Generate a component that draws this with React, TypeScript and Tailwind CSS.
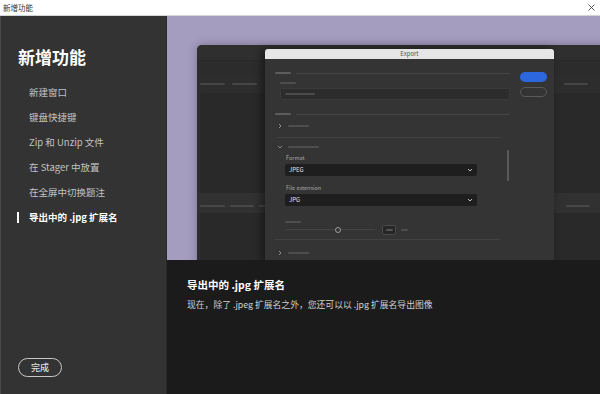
import React from "react";

const items = ["新建窗口", "键盘快捷键", "Zip 和 Unzip 文件", "在 Stager 中放置", "在全屏中切换题注", "导出中的 .jpg 扩展名"];

const ChevronRight = () => (
  <svg width="4" height="6" viewBox="0 0 4 6">
    <path d="M1 1l2 2-2 2" stroke="#8a8a8a" strokeWidth="1" fill="none" />
  </svg>
);

const ChevronDown = ({ color = "#8a8a8a" }: { color?: string }) => (
  <svg width="6" height="4" viewBox="0 0 6 4">
    <path d="M1 1l2 2 2-2" stroke={color} strokeWidth="1" fill="none" />
  </svg>
);

const SectionHead = ({ className = "" }: { className?: string }) => (
  <div className={`flex items-center gap-[5px] ${className}`}>
    <div className="w-[16px] h-[2px] rounded-full bg-[#5c5c5c]" />
    <div className="flex-1 h-px bg-[#454545]" />
  </div>
);

const Select = ({ value }: { value: string }) => (
  <div className="ml-[10px] w-[192px] h-[12px] rounded-[2px] bg-[#1e1e1e] flex items-center justify-between pl-[4px] pr-[4px]">
    <span className="text-[6px] leading-none text-[#e2e2e2]">{value}</span>
    <ChevronDown color="#bdbdbd" />
  </div>
);

const BackWindow = () => (
  <div className="absolute left-[30px] top-[29px] w-[420px] h-[240px] rounded-tl-[5px] bg-[#2d2d2d] shadow-[0_0_10px_rgba(40,30,60,0.35)] flex flex-col overflow-hidden">
    <div className="h-[16px] bg-[#2f2f2f] border-b border-[#292929]" />
    <div className="h-[14px] bg-[#2c2c2c]" />
    <div className="h-[18px] flex items-center px-[3px] gap-[7px]">
      <div className="w-[25px] h-[2px] rounded-full bg-[#464646]" />
      <div className="w-[25px] h-[2px] rounded-full bg-[#464646]" />
      <div className="ml-[300px] w-[24px] h-[2px] rounded-full bg-[#464646]" />
    </div>
    <div className="h-[100px] mx-[3px] rounded-[2px] bg-[#292929]" />
    <div className="h-[20px] flex items-start pt-[12px] px-[3px] gap-[5px] bg-[#313131]">
      <div className="w-[25px] h-[2px] rounded-full bg-[#474747]" />
      <div className="w-[24px] h-[2px] rounded-full bg-[#474747]" />
      <div className="w-[24px] h-[2px] rounded-full bg-[#474747]" />
      <div className="ml-[278px] w-[24px] h-[2px] rounded-full bg-[#474747]" />
    </div>
    <div className="flex-1 mx-[3px] rounded-[2px] bg-[#292929]" />
  </div>
);

const ExportDialog = () => (
  <div className="absolute left-[98px] top-[33px] w-[289px] h-[215px] rounded-t-[3px] bg-[#343434] shadow-[-3px_0_8px_rgba(0,0,0,0.45)] flex flex-col overflow-hidden">
    <div className="h-[10px] shrink-0 bg-[#e6e6e6] flex items-center justify-center">
      <span className="text-[6px] leading-none text-[#555]">Export</span>
    </div>
    <div className="relative flex flex-1">
      <div className="w-[245px] pl-[10px] flex flex-col">
        <SectionHead className="mt-[13px]" />
        <div className="mt-[8px] ml-[5px] w-[16px] h-[2px] rounded-full bg-[#4e4e4e]" />
        <div className="mt-[4px] ml-[5px] h-[12px] rounded-[2px] bg-[#2c2c2c] border border-[#3a3a3a] flex items-center">
          <div className="ml-[4px] w-[30px] h-[2px] rounded-full bg-[#4a4a4a]" />
        </div>
        <SectionHead className="mt-[13px]" />
        <div className="mt-[7px] h-[8px] flex items-center">
          <div className="ml-[2px] w-[6px] flex justify-center"><ChevronRight /></div>
          <div className="ml-[5px] w-[21px] h-[2px] rounded-full bg-[#4e4e4e]" />
        </div>
        <div className="mt-[7px] ml-[2px] w-[223px] h-px bg-[#414141]" />
        <div className="mt-[5px] h-[8px] flex items-center">
          <div className="ml-[2px] w-[6px] flex justify-center"><ChevronDown /></div>
          <div className="ml-[5px] w-[31px] h-[2px] rounded-full bg-[#4e4e4e]" />
        </div>
        <div className="mt-[3.5px] ml-[11px] text-[5.5px] leading-[7px] text-[#a8a8a8]">Format</div>
        <div className="mt-[2.5px]"><Select value="JPEG" /></div>
        <div className="mt-[8.5px] ml-[11px] text-[5.5px] leading-[7px] text-[#a8a8a8]">File extension</div>
        <div className="mt-[2px]"><Select value="JPG" /></div>
        <div className="mt-[15px] ml-[10px] w-[16px] h-[2px] rounded-full bg-[#4e4e4e]" />
        <div className="mt-[2px] h-[10px] flex items-center">
          <div className="ml-[11px] w-[49px] h-px bg-[#444]" />
          <div className="w-[6px] h-[6px] rounded-full border border-[#9a9a9a]" />
          <div className="w-[34px] h-px bg-[#444]" />
          <div className="ml-[7px] w-[14px] h-[10px] rounded-[2px] border border-[#4a4a4a] bg-[#262626] flex items-center justify-center">
            <div className="w-[7px] h-[2px] rounded-full bg-[#555]" />
          </div>
          <div className="ml-[5px] w-[7px] h-[2px] rounded-full bg-[#4e4e4e]" />
        </div>
        <div className="mt-[4px] w-[225px] h-px bg-[#414141]" />
        <div className="mt-[9px] h-[8px] flex items-center">
          <div className="ml-[2px] w-[6px] flex justify-center"><ChevronRight /></div>
          <div className="ml-[5px] w-[21px] h-[2px] rounded-full bg-[#4e4e4e]" />
        </div>
      </div>
      <div className="pl-[10px] pt-[13px] flex flex-col gap-[5px]">
        <div className="w-[27px] h-[10px] rounded-full bg-[#2c67dd]" />
        <div className="w-[27px] h-[10px] rounded-full border border-[#595959]" />
      </div>
      <div className="absolute left-[242px] top-[91px] w-[2px] h-[31px] rounded-full bg-[#5a5a5a]" />
    </div>
  </div>
);

export default function App() {
  return (
    <div className="w-[600px] h-[394px] flex flex-col overflow-hidden bg-white font-['Noto_Sans_CJK_SC',sans-serif]">
      <div className="h-[16px] shrink-0 flex items-center justify-between pl-[3px] pr-[5px] bg-white border-b border-[#d4d4d4]">
        <span className="text-[7.5px] leading-none text-[#333]">新增功能</span>
        <svg width="7" height="7" viewBox="0 0 7 7">
          <path d="M0.5 0.5l6 6M6.5 0.5l-6 6" stroke="#444" strokeWidth="0.9" />
        </svg>
      </div>
      <div className="flex flex-1 min-h-0">
        <aside className="w-[167px] shrink-0 flex flex-col bg-[#333333] border-l border-l-[#4a4a4a] border-r border-r-[#2a2a2a] pt-[31px]">
          <h1 className="pl-[17px] text-[17px] leading-[20px] font-bold text-white">新增功能</h1>
          <ul className="mt-[12.5px]">
            {items.map((item, i) => {
              const active = i === items.length - 1;
              return (
                <li key={item} className="h-[25px] flex items-center pl-[16px]">
                  <span className={`w-[2px] h-[11px] ${active ? "bg-white" : ""}`} />
                  <span className={`ml-[10px] text-[9.5px] ${active ? "font-bold text-white" : "text-[#c2c2c2]"}`}>{item}</span>
                </li>
              );
            })}
          </ul>
          <button className="mt-auto mb-[17px] ml-[17px] w-[44px] h-[19px] rounded-full border-[1.5px] border-[#c8c8c8] text-[9px] font-medium text-[#dedede] flex items-center justify-center">
            完成
          </button>
        </aside>
        <main className="flex-1 flex flex-col">
          <div className="relative h-[244px] shrink-0 bg-[#a59dc0] overflow-hidden">
            <BackWindow />
            <ExportDialog />
          </div>
          <div className="flex-1 bg-[#1b1b1b] pl-[20px] pt-[17px]">
            <h2 className="text-[10.5px] leading-[15px] font-bold text-white">导出中的 .jpg 扩展名</h2>
            <p className="mt-[7px] text-[8.8px] leading-[12px] text-[#d0d0d0]">现在，除了 .jpeg 扩展名之外，您还可以以 .jpg 扩展名导出图像</p>
          </div>
        </main>
      </div>
    </div>
  );
}
